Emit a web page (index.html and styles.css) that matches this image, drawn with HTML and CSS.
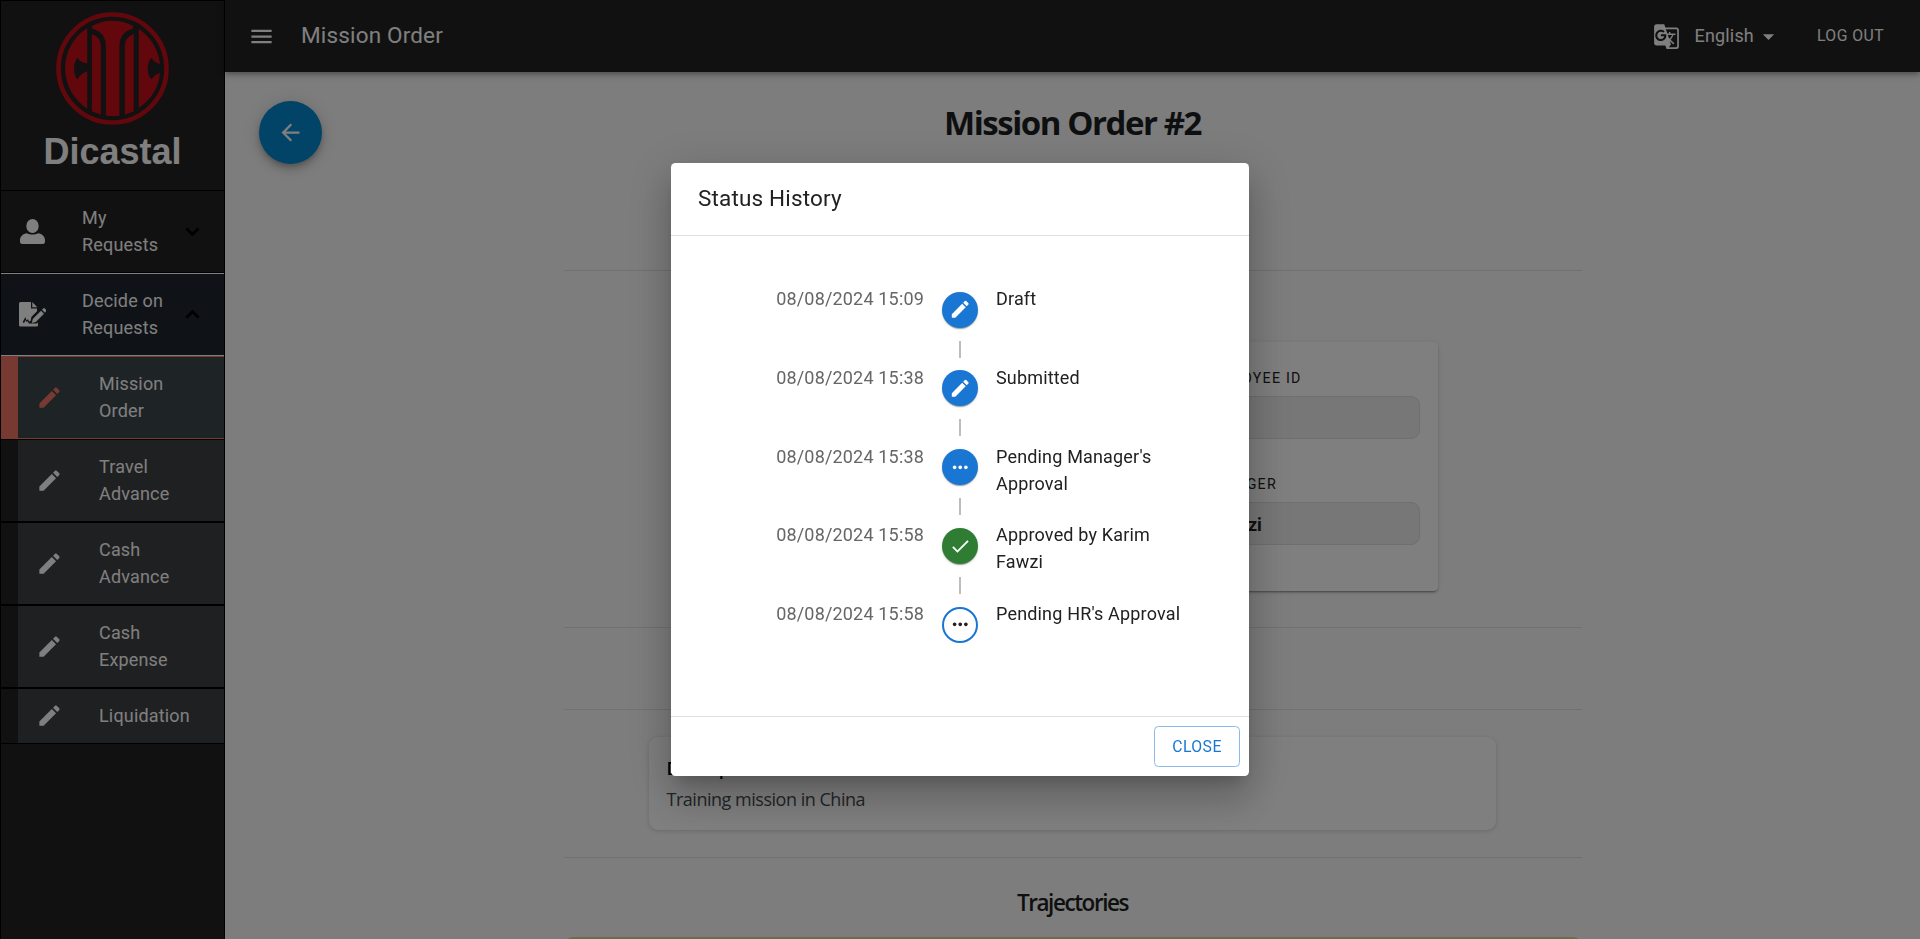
FILE: index.html
```html
<!DOCTYPE html>
<html lang="en">
<head>
<meta charset="utf-8">
<title>Mission Order</title>
<link rel="stylesheet" href="styles.css">
</head>
<body>
<svg class="defs" width="0" height="0">
  <symbol id="edit" viewBox="0 0 24 24"><path d="M3 17.25V21h3.75L17.81 9.94l-3.75-3.75L3 17.25zM20.71 7.04c.39-.39.39-1.02 0-1.41l-2.34-2.34a.9959.9959 0 0 0-1.41 0l-1.83 1.83 3.75 3.75 1.83-1.83z"/></symbol>
  <symbol id="more" viewBox="0 0 24 24"><path d="M6 10c-1.1 0-2 .9-2 2s.9 2 2 2 2-.9 2-2-.9-2-2-2zm12 0c-1.1 0-2 .9-2 2s.9 2 2 2 2-.9 2-2-.9-2-2-2zm-6 0c-1.1 0-2 .9-2 2s.9 2 2 2 2-.9 2-2-.9-2-2-2z"/></symbol>
</svg>
<div class="app">
  <aside class="sidebar">
    <div class="brand">
      <svg class="brand-logo" viewBox="168 36 340 340">
        <circle cx="338" cy="206" r="162.500" fill="none" stroke="currentColor" stroke-width="14"/>
        <path d="M262 84A144 144 0 0 0 262 327V214Q243 220 233 238C219 228 219 186 233 174Q241 189 262 191Z"/>
        <path d="M417 87A144 144 0 0 1 481 193Q463 188 456 174C440 186 440 228 456 238Q464 223 481 220A144 144 0 0 1 417 324Z"/>
        <path d="M276 78Q304 62 338 62T400 78V86C376 92 359 108 359 138V348Q338 350 318 348V138C318 108 300 92 276 86Z"/>
        <path d="M276 102Q303 112 303 138V345L276 335Z"/>
        <path d="M402 102Q375 112 375 138V345L402 335Z"/>
      </svg>
      <div class="brand-name">Dicastal</div>
    </div>
    <nav class="menu">
      <div class="item">
        <svg class="item-icon" viewBox="0 0 27 27"><ellipse cx="13.500" cy="8" rx="6.200" ry="7"/><path d="M8 15.200c1.700 1 3.500 1.400 5.500 1.400s3.800-.4 5.500-1.400c3.800.2 7 3.200 7 7V23.500q0 2.500-2.500 2.500h-20Q1 26 1 23.500V22.200c0-3.800 3.200-6.800 7-7z"/></svg>
        <span>My<br>Requests</span>
        <svg class="chevron" viewBox="0 0 24 24"><path d="M16.590 8.590 12 13.170 7.410 8.590 6 10l6 6 6-6z"/></svg>
      </div>
      <div class="item open">
        <svg class="item-icon" viewBox="0 0 27 27"><path d="M1.500 1H12v6.500h6v2.700l-5.500 5.500-1 4.300-1.500.6-.9-2.300-1.700 1-1-3.300-2.400 4.500H4v1.200h1.200l1.500-2.700.8 2 1.300-.8 1 2.400h8.400l.8-1.500v3.100q0 1.300-1.500 1.300H1.500Q0 25.500 0 24V2.500Q0 1 1.500 1zM13.300 1l5 5.200h-5z"/><path d="M22 9.700 13.800 18l-1 4 4-1 8.200-8.300zM23 8.700l1.300-1.300q.8-.6 1.500 0l1.300 1.400q.6.700 0 1.400L26 11.700z"/></svg>
        <span>Decide on<br>Requests</span>
        <svg class="chevron" viewBox="0 0 24 24"><path d="m12 8-6 6 1.410 1.410L12 10.830l4.590 4.580L18 14z"/></svg>
      </div>
      <div class="item sub active"><svg class="item-icon"><use href="#edit"/></svg><span>Mission<br>Order</span></div>
      <div class="item sub"><svg class="item-icon"><use href="#edit"/></svg><span>Travel<br>Advance</span></div>
      <div class="item sub"><svg class="item-icon"><use href="#edit"/></svg><span>Cash<br>Advance</span></div>
      <div class="item sub"><svg class="item-icon"><use href="#edit"/></svg><span>Cash<br>Expense</span></div>
      <div class="item sub"><svg class="item-icon"><use href="#edit"/></svg><span>Liquidation</span></div>
    </nav>
  </aside>
  <div class="page">
    <header class="topbar">
      <svg class="icon27" viewBox="0 0 24 24"><path d="M3 18h18v-2H3v2zm0-5h18v-2H3v2zm0-7v2h18V6H3z"/></svg>
      <div class="topbar-title">Mission Order</div>
      <svg class="icon27" viewBox="0 0 24 24"><path d="M21 4H11l-1-3H3c-1.100 0-2 .9-2 2v15c0 1.100.9 2 2 2h8l1 3h9c1.100 0 2-.9 2-2V6c0-1.100-.9-2-2-2zM7 16c-2.760 0-5-2.240-5-5s2.240-5 5-5c1.350 0 2.480.5 3.350 1.300L9.030 8.570c-.38-.36-1.040-.78-2.030-.78-1.740 0-3.150 1.440-3.150 3.210S5.260 14.210 7 14.210c2.010 0 2.840-1.440 2.920-2.410v.01H7v-1.710h4.680c.07.31.12.61.12 1.020C11.800 13.970 9.890 16 7 16zm6.170-5.420h3.700c-.43 1.250-1.110 2.430-2.050 3.470-.31-.35-.6-.72-.86-1.100l-.79-2.370zm8.330 9.920c0 .55-.45 1-1 1H14l2-2.500-1.040-3.100 3.100 3.100.92-.92-3.300-3.250.02-.02c1.130-1.250 1.930-2.690 2.400-4.220H20v-1.300h-4.530V8h-1.290v1.290h-1.440L11.460 5.500h9.040c.55 0 1 .45 1 1v14z"/></svg>
      <div class="language">English</div>
      <svg class="icon27 caret" viewBox="0 0 24 24"><path d="m7 10 5 5 5-5z"/></svg>
      <div class="logout">LOG OUT</div>
    </header>
    <main class="content">
      <div class="side"><div class="fab"><svg class="icon27" viewBox="0 0 24 24"><path d="M20 11H7.830l5.590-5.590L12 4l-8 8 8 8 1.410-1.410L7.830 13H20v-2z"/></svg></div></div>
      <div class="column">
        <section class="heading"><h1>Mission Order #2</h1></section>
        <section class="requester">
          <div class="card">
            <div class="field"><label>EMPLOYEE ID</label><div class="input"></div></div>
            <div class="field"><label>MANAGER</label><div class="input">Fawzi</div></div>
          </div>
        </section>
        <section class="spacer"></section>
        <section class="about">
          <div class="card description"><strong>Description</strong><p>Training mission in China</p></div>
        </section>
        <section class="trajectories"><h2>Trajectories</h2><div class="bar"></div></section>
      </div>
    </main>
  </div>
</div>
<div class="backdrop">
  <div class="dialog">
    <div class="dialog-title">Status History</div>
    <div class="dialog-body">
      <div class="step"><div class="time">08/08/2024 15:09</div><div class="track"><div class="dot"><svg><use href="#edit"/></svg></div><i></i></div><div class="status">Draft</div></div>
      <div class="step"><div class="time">08/08/2024 15:38</div><div class="track"><div class="dot"><svg><use href="#edit"/></svg></div><i></i></div><div class="status">Submitted</div></div>
      <div class="step"><div class="time">08/08/2024 15:38</div><div class="track"><div class="dot"><svg><use href="#more"/></svg></div><i></i></div><div class="status">Pending Manager's Approval</div></div>
      <div class="step"><div class="time">08/08/2024 15:58</div><div class="track"><div class="dot done"><svg viewBox="0 0 24 24"><path d="M9 16.170 4.830 12l-1.420 1.410L9 19 21 7l-1.410-1.410z"/></svg></div><i></i></div><div class="status">Approved by Karim Fawzi</div></div>
      <div class="step"><div class="time">08/08/2024 15:58</div><div class="track"><div class="dot outlined"><svg><use href="#more"/></svg></div></div><div class="status">Pending HR's Approval</div></div>
    </div>
    <div class="dialog-actions"><button class="close">CLOSE</button></div>
  </div>
</div>
</body>
</html>
```
FILE: styles.css
```css
* { box-sizing: border-box; }
body { margin: 0; height: 939px; overflow: hidden; font: 18px/27px Roboto, sans-serif; color: #212121; }
svg { display: block; fill: currentColor; flex: none; }
.defs { position: absolute; }
.app { display: flex; height: 939px; background: #fafafa; }

.sidebar { width: 225px; flex: none; background: #222; color: #fff; border: 1px solid #000; border-bottom: 0; }
.brand { height: 189px; padding-top: 11px; display: flex; flex-direction: column; align-items: center; }
.brand-logo { width: 113px; height: 113px; color: #c40e18; }
.brand-name { margin-top: 6px; font: bold 36px/42px "Liberation Sans", sans-serif; }
.item { display: flex; align-items: center; border: solid #000; border-width: 1px 0; padding: 13px 18px 14px; letter-spacing: .17px; }
.item-icon { width: 27px; height: 27px; }
.item span { margin-left: 36px; white-space: nowrap; }
.chevron { width: 27px; height: 27px; color: #000; margin-left: auto; }
.item .chevron path { stroke: #000; stroke-width: .6; }
.open { background: #1e242c; border-color: #fff; }
.sub { background: #3e4042; box-shadow: inset 17px 0 #222; padding-left: 35px; }
.sub.active { background: #3c464c; border-color: #ee7464; box-shadow: inset 17px 0 #ee7464; }
.active .item-icon { color: #ee7464; }

.page { flex: 1; display: flex; flex-direction: column; }
.topbar { height: 72px; flex: none; display: flex; align-items: center; padding: 0 36px 0 23px; background: #222; color: #fff; box-shadow: 0 2px 4px -1px rgba(0,0,0,.2), 0 4px 5px rgba(0,0,0,.14), 0 1px 10px rgba(0,0,0,.12); }
.icon27 { width: 27px; height: 27px; }
.topbar-title { margin: 0 auto 2px 26px; font-size: 22.5px; letter-spacing: .17px; }
.language { margin: 0 0 2px 15px; letter-spacing: .17px; }
.caret { margin-right: 35px; margin-left: 1px; }
.logout { margin-bottom: 1px; font-size: 15.75px; letter-spacing: .45px; }
.content { flex: 1; display: grid; grid-template-columns: 1fr 1018px 1fr; }
.side { padding: 29px 34px; }
.fab { width: 63px; height: 63px; border-radius: 50%; background: #0288d1; color: #fff; display: grid; place-items: center; box-shadow: 0 3px 5px -1px rgba(0,0,0,.2), 0 6px 10px rgba(0,0,0,.14), 0 1px 18px rgba(0,0,0,.12); }

.column section { border-bottom: 1px solid #e2e2e2; }
.column section:last-child { border: 0; }
.heading { height: 199px; padding-top: 26px; text-align: center; }
h1, h2 { margin: 0; font-family: "Open Sans", "Noto Sans", sans-serif; text-align: center; color: #1c1e20; }
h1 { font-size: 33px; line-height: 50px; letter-spacing: -1.45px; }
.requester { height: 357px; padding: 71px 144px 0; }
.card { background: #fff; box-shadow: 0 2px 1px -1px rgba(0,0,0,.2), 0 1px 1px rgba(0,0,0,.14), 0 1px 3px rgba(0,0,0,.12); }
.requester .card { height: 249px; border-radius: 4.5px; padding: 22px 18px; display: flex; flex-direction: column; align-items: flex-end; gap: 31px; box-shadow: 0 3px 1px -2px rgba(0,0,0,.2), 0 2px 2px rgba(0,0,0,.14), 0 1px 5px rgba(0,0,0,.12); }
.field { width: 219px; }
.field label { display: block; height: 32px; font-size: 14.2px; letter-spacing: 1.25px; line-height: 28px; }
.input { height: 43px; padding: 8px 14px; border: 1px solid #dedede; border-radius: 9px; background: #efefef; font-weight: bold; }
.spacer { height: 82px; }
.about { height: 148px; padding: 27px 86px 0 85px; }
.description { height: 93px; border-radius: 9px; padding: 18px; font-family: "Open Sans", "Noto Sans", sans-serif; color: #444b50; box-shadow: 0 1px 4px rgba(0,0,0,.16); }
.description strong { display: block; line-height: 27px; height: 31px; color: #000; font-weight: 600; letter-spacing: -.3px; }
.description p { margin: 0; letter-spacing: -.48px; }
h2 { font-size: 22.5px; line-height: 36px; font-weight: 600; letter-spacing: -1.45px; padding-top: 27px; }
.bar { height: 40px; margin-top: 16px; border-radius: 9px 9px 0 0; background: #d5de92; }

.backdrop { position: fixed; inset: 0; z-index: 10; display: grid; place-items: center; background: rgba(0,0,0,.5); }
.dialog { width: 578px; height: 613px; display: flex; flex-direction: column; background: #fff; border-radius: 4.5px; box-shadow: 0 11px 15px -7px rgba(0,0,0,.2), 0 24px 38px 3px rgba(0,0,0,.14), 0 9px 46px 8px rgba(0,0,0,.12); }
.dialog-title { height: 72px; padding: 18px 27px; font-size: 22.5px; line-height: 34px; letter-spacing: .17px; }
.dialog-body { flex: 1; padding: 42.75px 45px 0; border: solid #e0e0e0; border-width: 1px 0; }
.step { display: flex; height: 78.75px; letter-spacing: .17px; }
.time, .status { flex: 1; padding: 6.25px 18px; }
.time { text-align: right; color: #666; }
.track { display: flex; flex-direction: column; align-items: center; }
.dot { width: 36px; height: 36px; margin: 12.9px 0; border-radius: 50%; display: grid; place-items: center; background: #1976d2; color: #fff; box-shadow: 0 2px 1px -1px rgba(0,0,0,.2), 0 1px 1px rgba(0,0,0,.14), 0 1px 3px rgba(0,0,0,.12); }
.dot svg { width: 22.5px; height: 22.5px; }
.dot.done { background: #2e7d32; }
.dot.outlined { background: #fff; border: 2px solid #1976d2; color: #212121; box-shadow: none; }
.track i { flex: 1; width: 2px; background: #bdbdbd; }
.dialog-actions { height: 59px; padding: 9px; display: flex; justify-content: flex-end; }
.close { width: 86px; height: 41px; padding: 0 0 1px; border: 1px solid #8cbae8; border-radius: 4.5px; background: #fff; color: #1976d2; font: 15.75px/27px Roboto, sans-serif; letter-spacing: .45px; }
```
